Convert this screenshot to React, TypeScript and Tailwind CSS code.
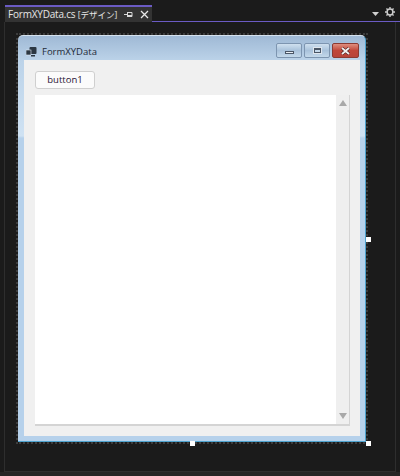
import React from "react";

function WinBtn({ w, cls, children }: { w: string; cls: string; children: React.ReactNode }) {
  return <div className={`${w} ${cls} h-[15px] rounded-[2px] border flex items-center justify-center`}>{children}</div>;
}

function Handle({ cls }: { cls: string }) {
  return <div className={`absolute w-[5px] h-[5px] bg-white ${cls}`} />;
}

export default function App() {
  return (
    <div className="w-[400px] h-[476px] bg-[#1b1b1b] flex flex-col overflow-hidden relative" style={{ fontFamily: '"Noto Sans", "Noto Sans CJK JP", sans-serif' }}>
      {/* tab strip */}
      <div className="h-[22px] flex shrink-0 pl-[5px] mt-0">
        <div className="w-[147px] h-[22px] mt-0 relative">
          <div className="h-[5px]" />
          <div className="h-[17px] bg-[#333333] border-t-2 border-[#6b5bc4] flex items-center pl-[3px] text-[#e6e6e6] text-[10px] leading-none whitespace-nowrap">
            <span className="w-[116px] shrink-0 tracking-[-0.2px]" style={{ fontFamily: '"Open Sans", "Noto Sans CJK JP", sans-serif' }}>FormXYData.cs <span className="text-[8.5px] tracking-[0px]">[デザイン]</span></span>
            <svg className="shrink-0" width="9" height="9" viewBox="0 0 9 9" fill="none" stroke="#d8d8d8" strokeWidth="1">
              <path d="M0 4.5H3M3.5 2V7M3.5 2.5H8V6.5H3.5M3.5 5.5H8" />
            </svg>
            <svg className="shrink-0 ml-[7px]" width="9" height="9" viewBox="0 0 9 9" fill="none" stroke="#e8e8e8" strokeWidth="1.3">
              <path d="M1 1L8 8M8 1L1 8" />
            </svg>
          </div>
        </div>
        <div className="flex-1 h-[22px] border-b-[1.5px] border-[#6b5bc4] relative">
          <svg className="absolute left-[220px] top-[12px]" width="7" height="4" viewBox="0 0 7 4"><path d="M0 0H7L3.5 4Z" fill="#d0d0d0" /></svg>
          <svg className="absolute left-[233px] top-[7px]" width="10" height="10" viewBox="0 0 11 11">
            <circle cx="5.5" cy="5.5" r="3.2" fill="none" stroke="#cfcfcf" strokeWidth="1.6" />
            <path d="M5.5 0V2M5.5 9V11M0 5.5H2M9 5.5H11M1.6 1.6L3 3M8 8L9.4 9.4M9.4 1.6L8 3M3 8L1.6 9.4" stroke="#cfcfcf" strokeWidth="1.5" />
          </svg>
        </div>
      </div>

      {/* designer surface */}
      <div className="flex-1 ml-[4px] mr-[4px] border-l border-r border-b border-[#2e2e2e] pl-[11px] pt-[11px] min-h-0">
        <div className="relative w-[352px] h-[411px] border-2 border-dotted border-[#3c3c3c]">
          <div className="w-[348px] h-[407px] rounded-t-[5px] border-r border-b border-[#4ea3cf] border-t border-t-[#d5e2ee] flex flex-col pl-[6px] pr-[5px] pb-[5px] bg-[linear-gradient(180deg,#9fb9d5_0px,#bcd3e9_25px,#cfe2f3_100px,#b6d1eb_102px)]">
            <div className="h-[24px] pt-[7px] shrink-0 flex items-center relative text-[#1e2a38] text-[9.5px] leading-none" style={{ fontFamily: '"Open Sans", sans-serif' }}>
              <svg className="ml-[2px]" width="11" height="10" viewBox="0 0 11 10">
                <rect x="3.5" y="0" width="7" height="7" rx="1" fill="#2c3742" />
                <rect x="0" y="3" width="5" height="5" fill="#2c3742" stroke="#dfe8f0" strokeWidth="0.6" />
                <rect x="5" y="8" width="4" height="1.5" fill="#2c3742" />
              </svg>
              <span className="ml-[5px]">FormXYData</span>
              <div className="absolute left-[252px] top-[7px] flex gap-[2px]">
                <WinBtn w="w-[26px]" cls="border-[#7d95b0] bg-gradient-to-b from-[#cfe0ef] via-[#a9c2db] to-[#c3d8ea]">
                  <div className="w-[9px] h-[3px] bg-[#e8eef4] border border-[#4a5666] mt-[3px]" />
                </WinBtn>
                <WinBtn w="w-[26px]" cls="border-[#7d95b0] bg-gradient-to-b from-[#cfe0ef] via-[#a9c2db] to-[#c3d8ea]">
                  <div className="w-[9px] h-[7px] bg-[#4a5666] border border-[#dfe6ee] flex items-center justify-center"><div className="w-[5px] h-[2px] bg-[#c4d8ea]" /></div>
                </WinBtn>
                <WinBtn w="w-[27px]" cls="border-[#8c3a32] bg-gradient-to-b from-[#df8e7f] via-[#c0463a] to-[#b8443a]">
                  <svg width="11" height="8" viewBox="0 0 11 8"><path d="M2 1L9 7M9 1L2 7" stroke="#4a2020" strokeWidth="3" /><path d="M2 1L9 7M9 1L2 7" stroke="#f2f2f2" strokeWidth="1.8" /></svg>
                </WinBtn>
              </div>
            </div>
            <div className="flex-1 bg-[#f0f0f0] flex flex-col px-[11px] pt-[11px] min-h-0">
              <div className="w-[60px] h-[18px] bg-[#fbfbfb] border border-[#cfcfcf] rounded-[3px] flex items-center justify-center text-[9.5px] leading-none text-[#2a1436] shrink-0" style={{ fontFamily: '"Open Sans", sans-serif' }}>button1</div>
              <div className="mt-[6px] w-[315px] h-[331px] bg-white border-r border-b-2 border-[#d4d4d4] flex justify-end shrink-0">
                <div className="w-[13px] h-full bg-[#efefef] flex flex-col items-center justify-between py-[5px]">
                  <svg width="8" height="6" viewBox="0 0 8 6"><path d="M4 0L8 6H0Z" fill="#a8a8a8" /></svg>
                  <svg width="8" height="6" viewBox="0 0 8 6"><path d="M0 0H8L4 6Z" fill="#a8a8a8" /></svg>
                </div>
              </div>
            </div>
          </div>
          <Handle cls="left-[348px] top-[202px]" />
          <Handle cls="left-[172px] top-[406px]" />
          <Handle cls="left-[348px] top-[406px]" />
        </div>
      </div>
      <div className="h-[4px] shrink-0 bg-[#252525]" />
    </div>
  );
}
